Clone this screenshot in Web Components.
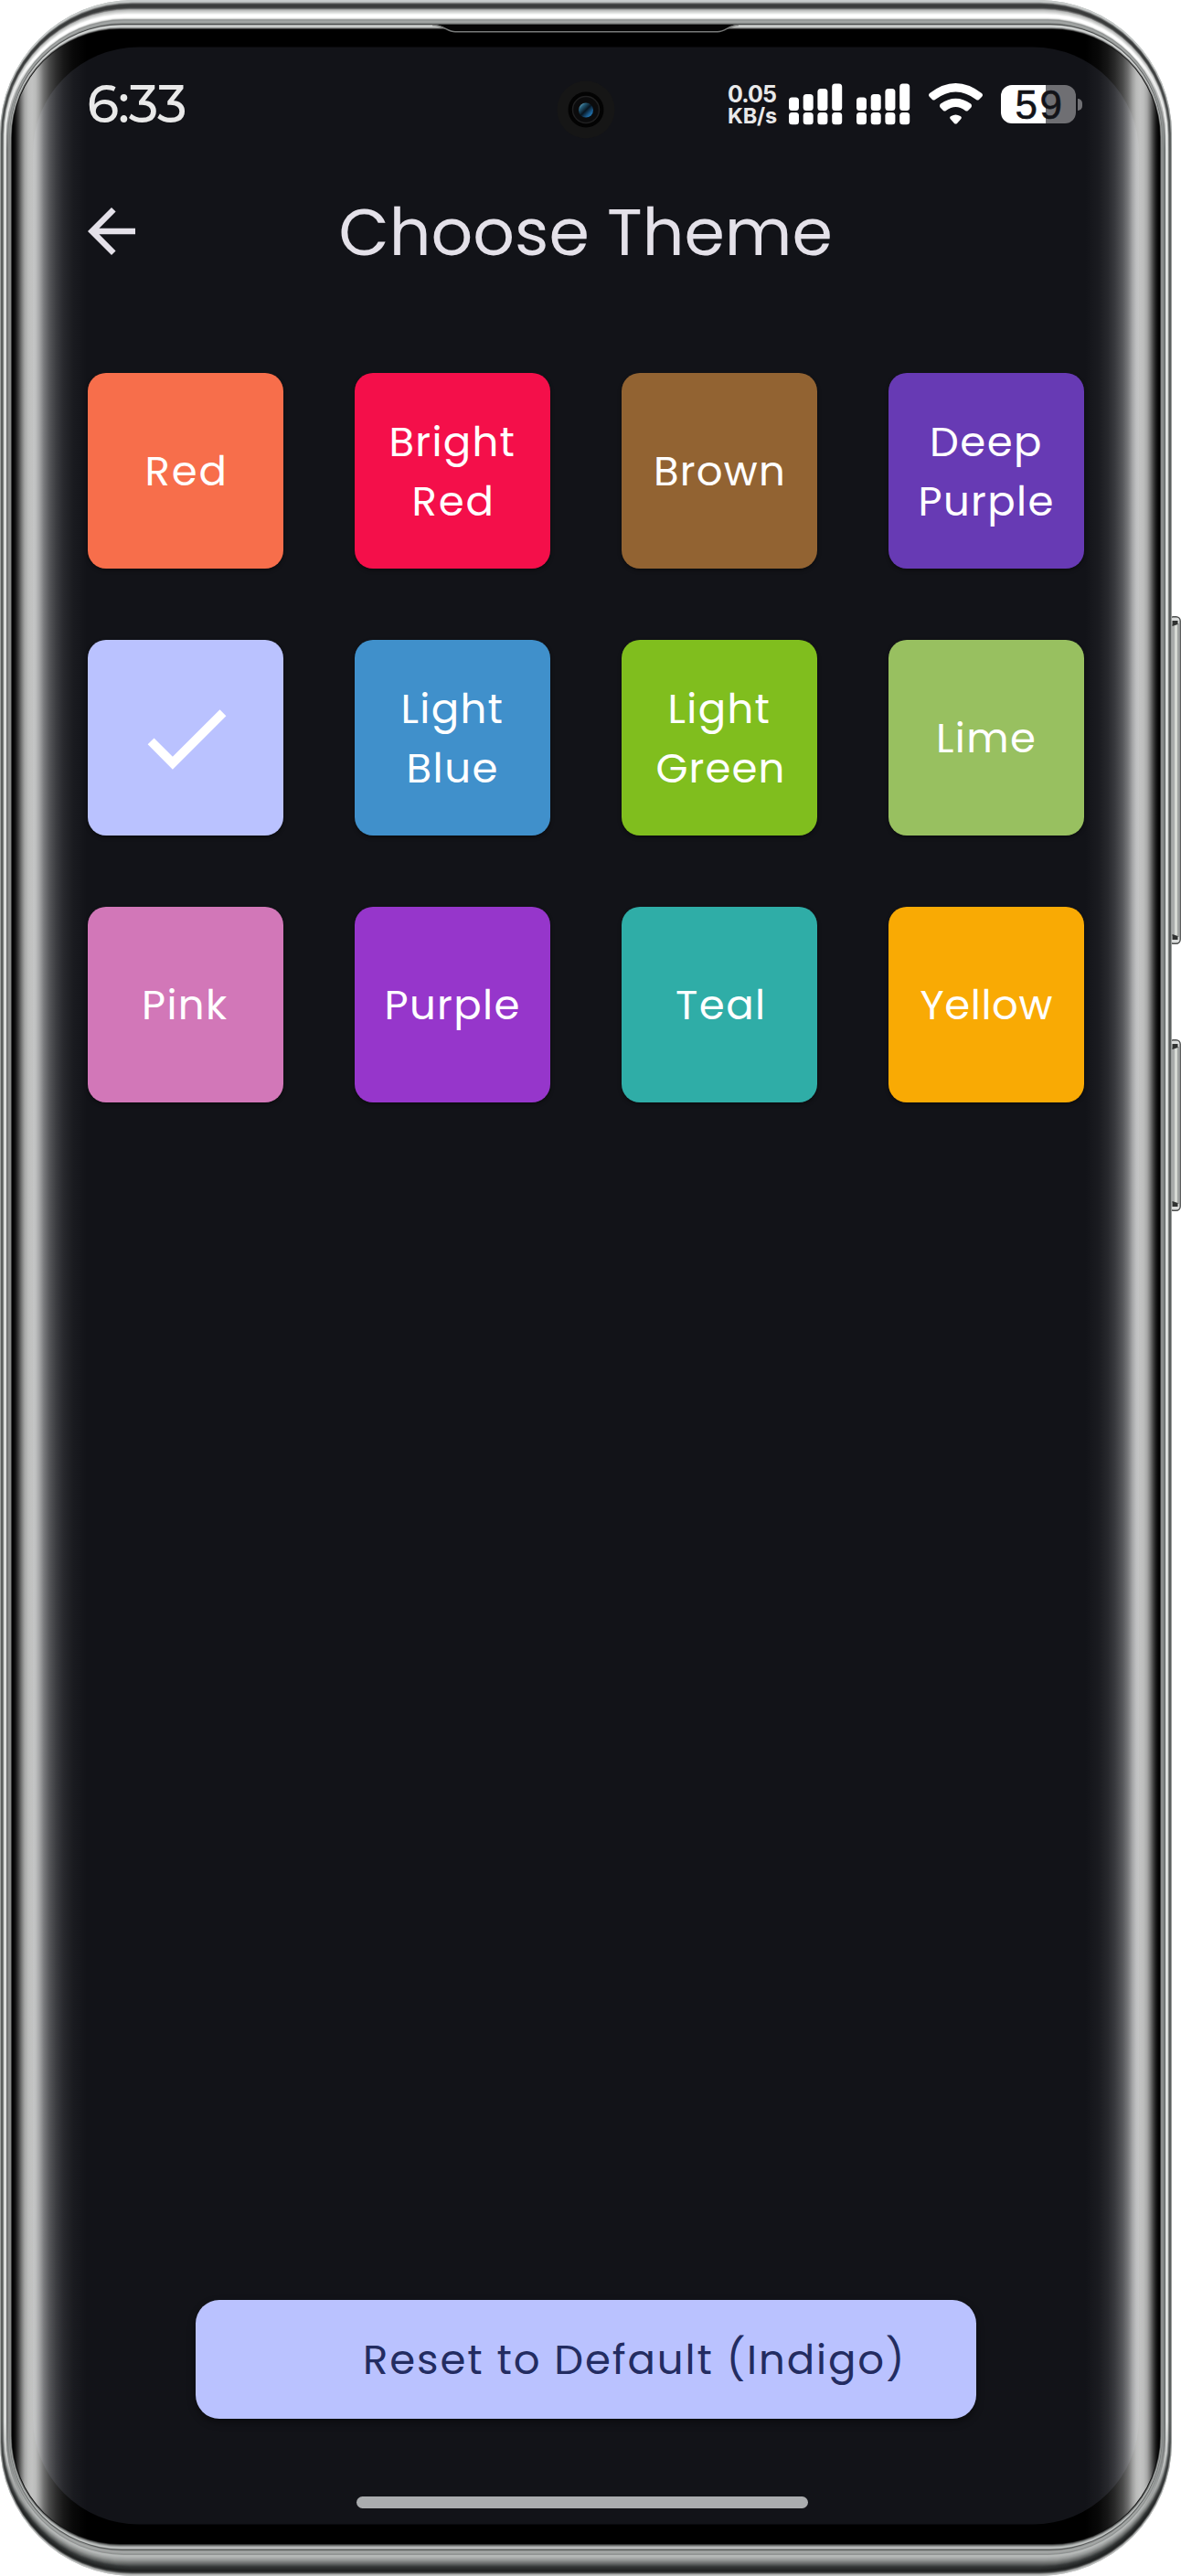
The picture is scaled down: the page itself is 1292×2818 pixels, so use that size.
<!DOCTYPE html>
<html lang="en">
<head>
<meta charset="utf-8">
<title>Choose Theme</title>
<style>
  html, body { margin: 0; background: #fff; }
  body { font-family: Poppins, Inter, "Noto Sans", sans-serif; }
</style>
</head>
<body>
<phone-shell>
  <status-bar slot="status"></status-bar>
  <app-header slot="header">Choose Theme</app-header>
  <theme-grid slot="content">
    <theme-tile color="#f76e4b"><fit-text w="83">Red</fit-text></theme-tile>
    <theme-tile color="#f40f4a"><fit-text w="133">Bright</fit-text><fit-text w="83">Red</fit-text></theme-tile>
    <theme-tile color="#926332"><fit-text w="138">Brown</fit-text></theme-tile>
    <theme-tile color="#673ab4"><fit-text w="118">Deep</fit-text><fit-text w="143">Purple</fit-text></theme-tile>
    <theme-tile color="#bac2ff" selected></theme-tile>
    <theme-tile color="#4090cb"><fit-text w="107">Light</fit-text><fit-text w="95">Blue</fit-text></theme-tile>
    <theme-tile color="#80be1e"><fit-text w="107">Light</fit-text><fit-text w="137">Green</fit-text></theme-tile>
    <theme-tile color="#98c060"><fit-text w="104">Lime</fit-text></theme-tile>
    <theme-tile color="#d277b8"><fit-text w="90">Pink</fit-text></theme-tile>
    <theme-tile color="#9636cb"><fit-text w="143">Purple</fit-text></theme-tile>
    <theme-tile color="#2fada7"><fit-text w="94">Teal</fit-text></theme-tile>
    <theme-tile color="#f9aa04"><fit-text w="145">Yellow</fit-text></theme-tile>
  </theme-grid>
  <reset-button slot="footer">Reset to Default (Indigo)</reset-button>
</phone-shell>

<script>
const mount = (el, html) => { el.attachShadow({ mode: 'open' }).innerHTML = html; return el.shadowRoot; };

/* Tracks its text so that the glyphs span exactly w pixels. */
class FitText extends HTMLElement {
  connectedCallback() {
    if (this.shadowRoot) return;
    mount(this, `<style>:host{display:block;white-space:pre;width:${this.getAttribute('w')}px}span{display:block}</style><span><slot></slot></span>`);
    const span = this.shadowRoot.querySelector('span');
    const cs = getComputedStyle(this);
    const ctx = document.createElement('canvas').getContext('2d');
    ctx.font = `${cs.fontWeight} ${cs.fontSize} ${cs.fontFamily}`;
    const text = this.textContent;
    const m = ctx.measureText(text);
    const ink = m.actualBoundingBoxRight + m.actualBoundingBoxLeft;
    span.style.letterSpacing = (this.getAttribute('w') - ink) / (text.length - 1) + 'px';
    span.style.marginLeft = m.actualBoundingBoxLeft + 'px';
    span.style.marginRight = '-40px';
  }
}

class PhoneBezel extends HTMLElement {
  connectedCallback() {
    const W = 1282, H = 2818, N = 70;
    const side = [[0,'#b4b7b6'],[.07,'#8d908f'],[.13,'#4e5151'],[.24,'#686b6b'],[.31,'#a8abaa'],[.37,'#e9ebea'],[.5,'#e4e6e5'],[.55,'#777a79'],[.62,'#6d7070'],[.75,'#8f9291'],[.9,'#8a8d8c'],[.96,'#454746'],[1,'#000']];
    const top = [[0,'#c9cdcc'],[.06,'#c4c7c6'],[.11,'#6c6e6e'],[.15,'#3a3c3c'],[.25,'#3d3f3f'],[.3,'#777'],[.33,'#b4b6b5'],[.42,'#dcdddc'],[.5,'#fff'],[.58,'#fff'],[.63,'#e4e5e4'],[.67,'#8c8f8e'],[.74,'#a7aaa9'],[.79,'#909392'],[.83,'#3c3e3e'],[.86,'#dfe1e0'],[.92,'#c2c5c4'],[.97,'#555'],[1,'#000']];
    const bot = [[0,'#c9cbca'],[.05,'#a5a7a6'],[.1,'#3e4040'],[.15,'#202222'],[.28,'#343737'],[.38,'#666968'],[.5,'#989b9a'],[.6,'#b5b8b7'],[.64,'#b9bcbb'],[.66,'#8b8e8d'],[.74,'#aaadac'],[.79,'#8b8e8d'],[.82,'#3f4141'],[.85,'#d0d3d2'],[.92,'#999c9b'],[.97,'#484a49'],[1,'#000']];
    const rgb = h => { h = h.slice(1); if (h.length === 3) h = [...h].map(c => c + c).join(''); return [0,2,4].map(i => parseInt(h.substr(i,2),16)); };
    const at = (stops, t) => {
      let i = 1; while (i < stops.length - 1 && stops[i][0] < t) i++;
      const [a, ca] = stops[i-1], [b, cb] = stops[i], k = Math.max(0, Math.min(1, (t-a)/(b-a)));
      const A = rgb(ca), B = rgb(cb); return `rgb(${A.map((v,j) => Math.round(v+(B[j]-v)*k))})`;
    };
    const rings = stops => Array.from({ length: N + 1 }, (_, i) => {
      const t = i / N, x = 13*t, y = 32*t, b = 35*t, r = 146 - 28*t;
      return `<rect x="${x}" y="${y}" width="${W-2*x}" height="${H-y-b}" rx="${r}" fill="${at(stops,t)}"/>`;
    }).join('');
    const fade = [[0,0],[14,0],[17,.08],[20,.24],[24,.5],[27,.66],[31,.75],[35,.77],[39,.74],[43,.63],[48,.44],[54,.29],[62,.17],[70,.09],[80,.035],[95,0]];
    const grad = (id, x1, x2) => `<linearGradient id="${id}" gradientUnits="userSpaceOnUse" x1="${x1}" x2="${x2}" y1="0" y2="0">${fade.map(([x,o]) => `<stop offset="${x/95}" stop-color="#fcfdfc" stop-opacity="${o}"/>`).join('')}</linearGradient>`;
    const key = (y, h) => `<g><rect x="1279" y="${y+.8}" width="12.2" height="${h-1.6}" rx="4.5" fill="#d9dbda" stroke="#4b4d4c" stroke-width="1.4"/>
      <rect x="1282" y="${y+9}" width="5" height="${h-18}" fill="#a9acab"/><rect x="1285" y="${y+9}" width="3.5" height="${h-18}" fill="#d6d9d4"/>
      <path d="M1289 ${y+8}V${y+h-8}" stroke="#6b6e6c"/>
      <path d="M1282.5 ${y+5}h6v4l-6 2zM1282.5 ${y+h-5}h6v-4l-6-2z" fill="#303231"/></g>`;
    mount(this, `<style>:host{display:block}svg{display:block}</style>
    <svg width="1292" height="2818" viewBox="0 0 1292 2818">
      <defs>${grad('gl',0,95)}${grad('gr',1282,1187)}
        <linearGradient id="ft" gradientUnits="userSpaceOnUse" x1="0" x2="0" y1="65" y2="165"><stop offset="0" stop-color="#fff"/><stop offset="1" stop-color="#000"/></linearGradient>
        <linearGradient id="fb" gradientUnits="userSpaceOnUse" x1="0" x2="0" y1="2650" y2="2750"><stop offset="0" stop-color="#000"/><stop offset="1" stop-color="#fff"/></linearGradient>
        <mask id="mt"><rect width="1292" height="166" fill="url(#ft)"/></mask>
        <mask id="mb"><rect y="2649" width="1292" height="170" fill="url(#fb)"/></mask>
        <clipPath id="glass"><rect x="13.5" y="32" width="1255" height="2751" rx="118"/></clipPath>
        <linearGradient id="lens" x1="0" y1="0" x2="1" y2="1"><stop offset="0" stop-color="#9fd6ea"/><stop offset=".25" stop-color="#245c78"/><stop offset=".5" stop-color="#07141f"/><stop offset=".75" stop-color="#1b5f94"/><stop offset="1" stop-color="#2b8bc8"/></linearGradient>
      </defs>
      ${key(674,359)}${key(1137,188)}
      ${rings(side)}
      <g mask="url(#mt)">${rings(top)}</g>
      <g mask="url(#mb)">${rings(bot)}</g>
      <rect x="36" y="51.5" width="1210" height="2710" rx="116" fill="#121318"/>
      <g clip-path="url(#glass)"><rect width="95" height="2818" fill="url(#gl)"/><rect x="1187" width="95" height="2818" fill="url(#gr)"/></g>
      <path d="M473 27H808C797 27 794 34.5 785 34.5H498C489 34.5 486 27 473 27Z" fill="#050505"/>
      <path d="M473 27.5C486 27.5 489 34.8 498 34.8H785C794 34.8 797 27.5 808 27.5" fill="none" stroke="#777978" stroke-width="1.5"/>
      <circle cx="641" cy="120" r="31.5" fill="#161616"/><circle cx="641" cy="120" r="19.5" fill="#030303"/>
      <circle cx="641" cy="120" r="14.5" fill="#0b0b0c" stroke="#202021" stroke-width="1.5"/><circle cx="641" cy="120.5" r="8" fill="url(#lens)"/>
    </svg>`);
  }
}

class PhoneShell extends HTMLElement {
  connectedCallback() {
    mount(this, `<style>
      :host{display:grid;width:1292px;height:2818px;overflow:hidden}
      phone-bezel,.screen{grid-area:1/1}
      .screen{display:flex;flex-direction:column;box-sizing:border-box;width:1282px;height:2818px;padding:86px 96px 74px;z-index:1}
      .status{height:54px}.head{height:110px;margin-top:60px}.body{margin-top:98px;flex:1}
      .foot{display:flex;justify-content:center}
      .home{align-self:center;width:494px;height:13px;border-radius:7px;background:#aaacae;margin:85px 8px 0 0}
    </style>
    <phone-bezel></phone-bezel>
    <div class="screen"><div class="status"><slot name="status"></slot></div><div class="head"><slot name="header"></slot></div>
    <div class="body"><slot name="content"></slot></div><div class="foot"><slot name="footer"></slot></div><div class="home"></div></div>`);
  }
}

class StatusBar extends HTMLElement {
  connectedCallback() {
    const xs = [0,15.7,31.4,47.2], tops = [15.5,12,6,.4];
    const bars = `<svg width="59" height="46">${xs.map((x,i) => `<rect x="${x}" y="${tops[i]}" width="11" height="${30-tops[i]}" rx="3.5"/><rect x="${x}" y="32" width="11" height="13.3" rx="3.5"/>`).join('')}</svg>`;
    mount(this, `<style>
      :host{display:flex;justify-content:space-between;color:#e9e9e9}
      svg{display:block;fill:#fff}
      .time{font-family:Montserrat,Poppins,Inter,sans-serif;font-size:57px;line-height:60px;font-weight:500;margin:-2px 0 0 1px}
      .right{display:flex;align-items:flex-start;margin-right:2px;padding-top:5px}
      .net{font-family:Inter,sans-serif;font-weight:700;font-size:25px;line-height:23px;margin-right:13px;width:53px;padding-top:1px}
      .net .u{font-size:23.500px}
      .bars{margin-right:15px}.bars2{margin-right:19px}
      .wifi{margin-right:19px}
      .bat{display:flex;align-items:center;margin-top:2px}
      .cell{font-family:"Liberation Sans",Inter,sans-serif;width:82px;height:42px;border-radius:12px;background:linear-gradient(90deg,#fff 48.5px,#6f6f73 48.5px);color:#121318;font-size:44px;line-height:44px;-webkit-text-stroke:.6px #121318;display:flex;justify-content:center}
      .nub{width:5px;height:13px;border-radius:0 6px 6px 0;background:#6f6f73;margin-left:2px}
    </style>
    <fit-text class="time" w="106">6:33</fit-text>
    <div class="right"><div class="net"><fit-text w="52">0.05</fit-text><fit-text class="u" w="53">KB/s</fit-text></div>
      <div class="bars">${bars}</div><div class="bars2">${bars}</div>
      <svg class="wifi" width="61" height="46" viewBox="0 0 61 46"><path d="M2 11Q30.500 -11 59 11Q61 13 59 15L56 18Q54.500 19 53 18Q30.500 1 8 18Q6.500 19 5 18L2 15Q0 13 2 11ZM14 22.500Q30.500 11 47 22.500Q49 24.500 47 27L44 30Q42.500 31 41 30Q30.500 22 20 30Q18.500 31 17 30L14 27Q12 24.500 14 22.500ZM25.500 36Q30.500 33 35.500 36Q38 37.500 36 39.500L32 44Q30.500 45 29 44L25 39.500Q23 37.500 25.500 36Z"/></svg>
      <div class="bat"><div class="cell"><fit-text w="49">59</fit-text></div><div class="nub"></div></div>
    </div>`);
  }
}

class AppHeader extends HTMLElement {
  connectedCallback() {
    const t = this.textContent;
    mount(this, `<style>
      :host{display:grid;grid-template-columns:78px 1fr 78px;align-items:center;color:#e4e1e9}
      svg{display:block;fill:currentColor;margin:-1px 0 0 -13px}
      .title{font-size:71.500px;line-height:104px;justify-self:center;margin-top:2px}
    </style>
    <svg width="78" height="78" viewBox="0 0 24 24"><path d="M20 11H7.830l5.590-5.590L12 4l-8 8 8 8 1.410-1.410L7.830 13H20z"/></svg>
    <fit-text class="title" w="535">${t}</fit-text><span></span>`);
  }
}

class ThemeGrid extends HTMLElement {
  connectedCallback() {
    mount(this, `<style>:host{display:grid;grid-template-columns:repeat(4,214px);gap:78px}</style><slot></slot>`);
  }
}

class ThemeTile extends HTMLElement {
  connectedCallback() {
    const check = `<svg width="117" height="117" viewBox="0 0 24 24"><path d="M9 16.170L4.830 12l-1.420 1.410L9 19 21 7l-1.410-1.410z"/></svg>`;
    mount(this, `<style>
      :host{display:flex;flex-direction:column;align-items:center;justify-content:center;height:214px;border-radius:20px;background:${this.getAttribute('color')};color:#fff;font-size:45px;line-height:65px;box-shadow:0 2px 4px rgba(0,0,0,.4)}
      :host(:not([selected])){box-sizing:border-box;padding-top:1px}
      svg{fill:#fff;display:block}
    </style>${this.hasAttribute('selected') ? check : '<slot></slot>'}`);
  }
}

class ResetButton extends HTMLElement {
  connectedCallback() {
    mount(this, `<style>
      :host{display:flex;align-items:center;box-sizing:border-box;width:854px;height:130px;padding:2px 0 0 186px;border-radius:26px;background:#bac2ff;color:#232c61;font-size:45px;line-height:64px;box-shadow:0 4px 8px rgba(0,0,0,.4)}
    </style><fit-text w="585">${this.textContent}</fit-text>`);
  }
}

/* Containers come first: fit-text measures with the font size they pass down. */
customElements.define('phone-bezel', PhoneBezel);
customElements.define('phone-shell', PhoneShell);
customElements.define('theme-grid', ThemeGrid);
customElements.define('theme-tile', ThemeTile);
customElements.define('status-bar', StatusBar);
customElements.define('app-header', AppHeader);
customElements.define('reset-button', ResetButton);
customElements.define('fit-text', FitText);
</script>
</body>
</html>
